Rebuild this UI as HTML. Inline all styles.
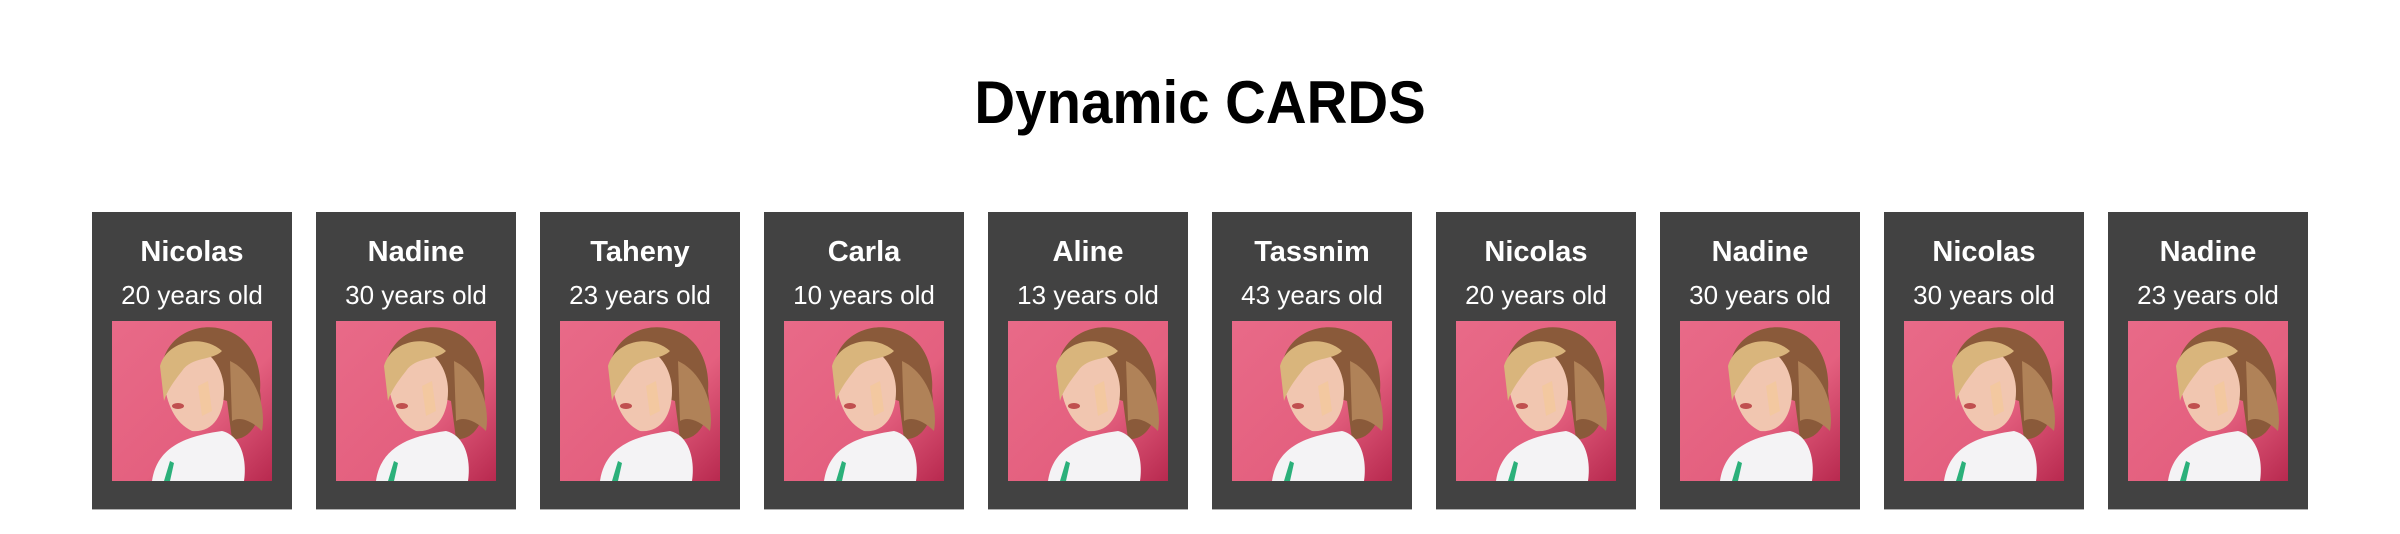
<!DOCTYPE html>
<html><head><meta charset="utf-8"><style>
html,body{margin:0;padding:0;background:#fff;width:2400px;height:534px;overflow:hidden}
h1{position:absolute;left:0;width:2400px;top:68px;margin:0;text-align:center;font:bold 60px/70px "Liberation Sans",sans-serif;color:#000}
h1 span{display:inline-block;transform:scaleX(0.94)}
.card{position:absolute;top:212px;width:200px;height:297px;background:#424242;box-shadow:0 1px 0 #b0b0b0;color:#fff;font-family:"Liberation Sans",sans-serif;text-align:center}
.n{position:absolute;top:23px;left:0;width:200px;font-weight:bold;font-size:29px;line-height:34px}
.a{position:absolute;top:68px;left:0;width:200px;font-size:26px;line-height:30px}
svg{position:absolute;left:20px;top:109px;width:160px;height:160px}
</style></head><body>
<h1><span>Dynamic CARDS</span></h1>
<svg width="0" height="0" style="position:absolute">
<defs>
<linearGradient id="bg" x1="0" y1="0" x2="1" y2="1"><stop offset="0" stop-color="#e86a88"/><stop offset="0.6" stop-color="#e4607f"/><stop offset="1" stop-color="#b8294f"/></linearGradient>
<g id="p">
<rect width="160" height="160" fill="url(#bg)"/>
<path d="M50 60 C45 20 80 0 110 8 C140 15 150 45 148 70 C152 95 140 120 120 118 L115 80 Z" fill="#8a5a3a"/>
<path d="M118 40 C140 50 155 80 150 110 C140 100 128 95 120 100 Z" fill="#b08258"/>
<path d="M52 40 C50 70 58 100 80 110 C100 112 112 95 112 70 C112 45 95 25 75 25 C62 25 55 32 52 40 Z" fill="#f1c6b0"/>
<path d="M48 45 C55 20 90 12 110 30 C100 40 80 35 70 50 C62 60 55 70 52 80 Z" fill="#d9b57c"/>
<path d="M86 65 L96 60 L100 90 L90 95 Z" fill="#f3c8a0"/>
<path d="M40 160 C45 125 75 115 110 110 C130 115 135 140 132 160 Z" fill="#f4f3f5"/>
<path d="M52 160 L58 140 L62 142 L58 160 Z" fill="#2bb07a"/>
<ellipse cx="66" cy="85" rx="6" ry="3" fill="#c0504f"/>
</g></defs></svg>
<div class="card" style="left:92px"><div class="n">Nicolas</div><div class="a">20 years old</div><svg viewBox="0 0 160 160"><use href="#p"/></svg></div>
<div class="card" style="left:316px"><div class="n">Nadine</div><div class="a">30 years old</div><svg viewBox="0 0 160 160"><use href="#p"/></svg></div>
<div class="card" style="left:540px"><div class="n">Taheny</div><div class="a">23 years old</div><svg viewBox="0 0 160 160"><use href="#p"/></svg></div>
<div class="card" style="left:764px"><div class="n">Carla</div><div class="a">10 years old</div><svg viewBox="0 0 160 160"><use href="#p"/></svg></div>
<div class="card" style="left:988px"><div class="n">Aline</div><div class="a">13 years old</div><svg viewBox="0 0 160 160"><use href="#p"/></svg></div>
<div class="card" style="left:1212px"><div class="n">Tassnim</div><div class="a">43 years old</div><svg viewBox="0 0 160 160"><use href="#p"/></svg></div>
<div class="card" style="left:1436px"><div class="n">Nicolas</div><div class="a">20 years old</div><svg viewBox="0 0 160 160"><use href="#p"/></svg></div>
<div class="card" style="left:1660px"><div class="n">Nadine</div><div class="a">30 years old</div><svg viewBox="0 0 160 160"><use href="#p"/></svg></div>
<div class="card" style="left:1884px"><div class="n">Nicolas</div><div class="a">30 years old</div><svg viewBox="0 0 160 160"><use href="#p"/></svg></div>
<div class="card" style="left:2108px"><div class="n">Nadine</div><div class="a">23 years old</div><svg viewBox="0 0 160 160"><use href="#p"/></svg></div>
</body></html>
